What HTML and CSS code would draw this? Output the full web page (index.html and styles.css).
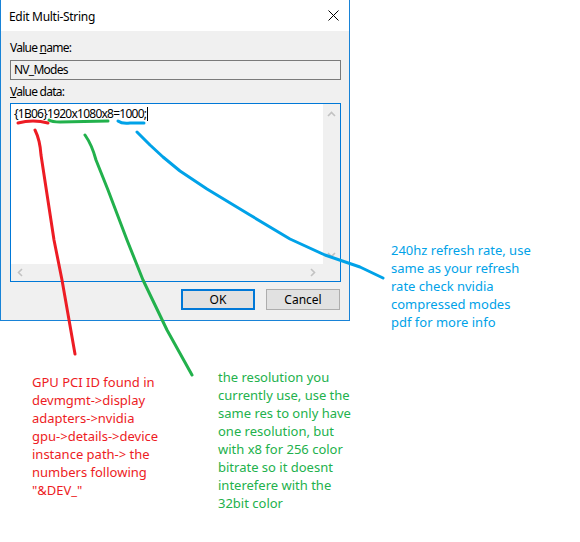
FILE: index.html
```html
<!DOCTYPE html>
<html>
<head>
<meta charset="utf-8">
<link rel="stylesheet" href="styles.css">
</head>
<body>
<div class="page">
  <div class="dialog">
    <div class="titlebar">
      <span class="title">Edit Multi-String</span>
      <svg class="close" width="11" height="11" viewBox="0 0 11 11"><path d="M0.5 0.5 L10.5 10.5 M10.5 0.5 L0.5 10.5" stroke="#000" stroke-width="1" fill="none"/></svg>
    </div>
    <div class="body">
      <div class="label">Value <u>n</u>ame:</div>
      <div class="field">NV_Modes</div>
      <div class="label label-data"><u>V</u>alue data:</div>
      <div class="data">
        <div class="textarea"><span class="value">{1B06}1920x1080x8=1000;</span><span class="caret"></span></div>
        <div class="vscroll">
          <svg width="9" height="6" viewBox="0 0 9 6"><path d="M1 5 L4.5 1.5 L8 5" stroke="#c2c2c2" stroke-width="1.6" fill="none"/></svg>
          <svg width="9" height="6" viewBox="0 0 9 6"><path d="M1 1 L4.5 4.5 L8 1" stroke="#c2c2c2" stroke-width="1.6" fill="none"/></svg>
        </div>
        <div class="hscroll">
          <svg width="6" height="9" viewBox="0 0 6 9"><path d="M5 1 L1.5 4.5 L5 8" stroke="#c2c2c2" stroke-width="1.6" fill="none"/></svg>
          <svg width="6" height="9" viewBox="0 0 6 9"><path d="M1 1 L4.5 4.5 L1 8" stroke="#c2c2c2" stroke-width="1.6" fill="none"/></svg>
        </div>
        <div class="corner"></div>
      </div>
      <div class="buttons">
        <div class="btn btn-ok">OK</div>
        <div class="btn">Cancel</div>
      </div>
    </div>
  </div>

  <svg class="scribbles" width="580" height="542" viewBox="0 0 580 542">
    <g fill="none" stroke-width="3" stroke-linecap="round" stroke-linejoin="round">
      <path d="M18 123 Q33 119 48 123" stroke="#ed1c24"/>
      <path d="M49 120 Q52 122 60 122 L108 121" stroke="#22b14c"/>
      <path d="M118 121 Q122 124 130 123 L144 123" stroke="#00a2e8"/>
      <path d="M35 130 Q40 140 41 155 L54 240 L62 280 L75 354" stroke="#ed1c24"/>
      <path d="M85 135 Q92 145 96 160 L108 190 L127 240 L143 280 L167 330 L192 375" stroke="#22b14c"/>
      <path d="M137 132 L150 145 L163 157 L180 171 L207 189 L250 215 L290 239 L325 255 L360 267 L383 278" stroke="#00a2e8"/>
    </g>
  </svg>

  <div class="note note-blue">240hz refresh rate, use<br>same as your refresh<br>rate check nvidia<br>compressed modes<br>pdf for more info</div>
  <div class="note note-red">GPU PCI ID found in<br>devmgmt-&gt;display<br>adapters-&gt;nvidia<br>gpu-&gt;details-&gt;device<br>instance path-&gt; the<br>numbers following<br>"&amp;DEV_"</div>
  <div class="note note-green">the resolution you<br>currently use, use the<br>same res to only have<br>one resolution, but<br>with x8 for 256 color<br>bitrate so it doesnt<br>interefere with the<br>32bit color</div>
</div>
</body>
</html>
```

FILE: styles.css
```css
html, body {
  margin: 0;
  padding: 0;
  background: #ffffff;
}

.page {
  position: relative;
  width: 580px;
  height: 542px;
  overflow: hidden;
  font-family: "Noto Sans", "Open Sans", sans-serif;
}

.dialog {
  width: 348px;
  border: 1px solid #1883d7;
  border-top: none;
  background: #f0f0f0;
  font-size: 12px;
  color: #000;
}

.titlebar {
  height: 31px;
  background: #ffffff;
  display: flex;
  align-items: center;
  justify-content: space-between;
  padding: 0 10px 0 8px;
}

.title {
  font-size: 12px;
  line-height: 15px;
  margin-top: 1px;
  letter-spacing: -0.3px;
}

.close {
  display: block;
  margin-top: -1px;
}

.body {
  padding: 9px 8px 10px 9px;
  display: flex;
  flex-direction: column;
  letter-spacing: -0.75px;
}

.label {
  line-height: 15px;
  height: 15px;
}

.label u {
  text-decoration-thickness: 1px;
  text-underline-offset: 1px;
}

.field {
  margin-top: 5px;
  height: 18px;
  border: 1px solid #7a7a7a;
  background: #f0f0f0;
  line-height: 18px;
  padding-left: 3px;
}

.label-data {
  margin-top: 4px;
}

.data {
  margin-top: 4px;
  height: 177px;
  border: 1px solid #0078d7;
  display: grid;
  grid-template-columns: 1fr 17px;
  grid-template-rows: 1fr 17px;
  background: #f0f0f0;
}

.textarea {
  background: #ffffff;
  padding: 2px 3px;
  line-height: 15px;
  display: flex;
  align-items: flex-start;
}

.caret {
  display: inline-block;
  width: 1px;
  height: 14px;
  background: #000;
  margin-top: 1px;
  margin-left: 1px;
}

.vscroll {
  display: flex;
  flex-direction: column;
  justify-content: space-between;
  align-items: center;
  padding: 7px 0 6px;
}

.hscroll {
  display: flex;
  justify-content: space-between;
  align-items: center;
  padding: 0 7px 0 6px;
}

.vscroll svg, .hscroll svg {
  display: block;
}

.buttons {
  margin-top: 7px;
  display: flex;
  justify-content: flex-end;
  gap: 11px;
  padding-right: 1px;
}

.btn {
  box-sizing: border-box;
  width: 74px;
  height: 21px;
  border: 1px solid #adadad;
  background: #e1e1e1;
  text-align: center;
  line-height: 19px;
  font-size: 12px;
  letter-spacing: 0;
}

.btn-ok {
  border: 2px solid #0078d7;
  line-height: 17px;
}

.scribbles {
  position: absolute;
  left: 0;
  top: 0;
  pointer-events: none;
}

.note {
  position: absolute;
  font-family: "Noto Sans", "Open Sans", sans-serif;
  font-size: 13px;
  line-height: 18px;
  white-space: nowrap;
}

.note-blue {
  left: 391px;
  top: 241px;
  color: #00a2e8;
}

.note-red {
  left: 32px;
  top: 373px;
  color: #ed1c24;
}

.note-green {
  left: 218px;
  top: 368px;
  color: #22b14c;
}
```
